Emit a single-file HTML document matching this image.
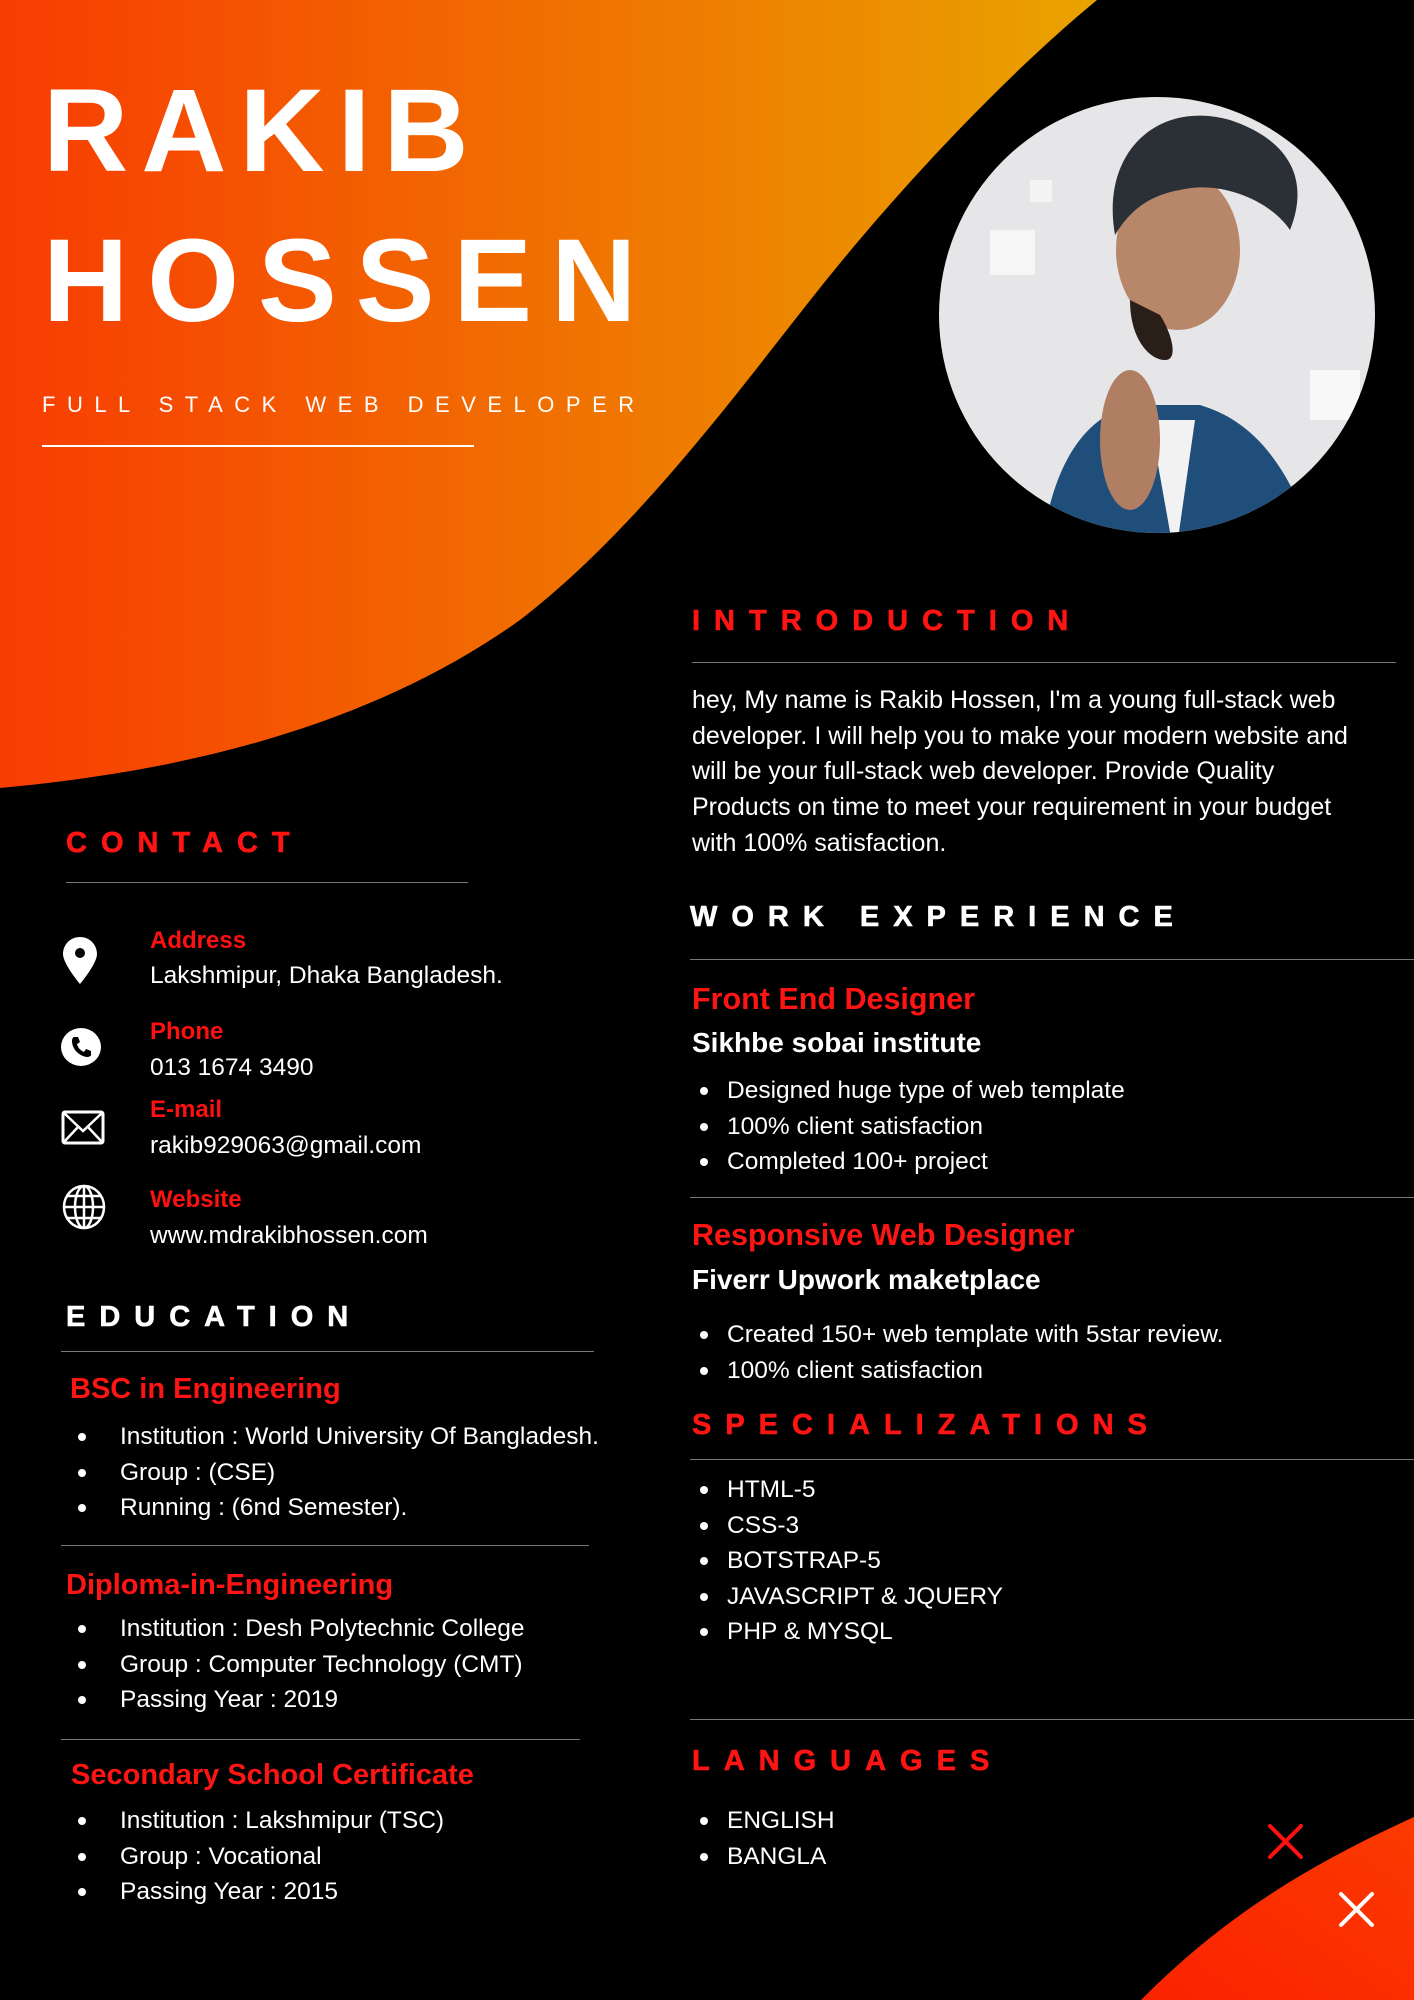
<!DOCTYPE html>
<html><head><meta charset="utf-8"><style>
*{margin:0;padding:0;box-sizing:border-box}
body{width:1414px;height:2000px;background:#000;position:relative;overflow:hidden;font-family:"Liberation Sans",sans-serif;color:#fff}
.a{position:absolute;white-space:nowrap}
.name{font-weight:bold;font-size:118px;line-height:118px;color:#fff}
.h{font-weight:bold;font-size:29px;line-height:34px;letter-spacing:14px;-webkit-text-stroke:0.6px currentColor}
.red{color:#ff1414}
.ln{position:absolute;height:1px;background:#777}
.lab{font-weight:bold;font-size:24px;line-height:28px;color:#ff1010}
.val{font-size:24.5px;line-height:28px;color:#fff}
.t{font-weight:bold;font-size:29px;line-height:34px;color:#ff1414}
.st{font-weight:bold;font-size:28px;line-height:32px;color:#fff}
.ul{position:absolute;font-size:24.5px;line-height:35.5px;white-space:nowrap}
.ul div{position:relative;padding-left:var(--p)}
.ul div:before{content:"";position:absolute;left:0;top:14px;width:8px;height:8px;border-radius:50%;background:#fff}
.p{font-size:25px;line-height:35.7px}
</style></head><body>
<svg class="a" style="left:0;top:0" width="1414" height="2000">
<defs>
<linearGradient id="g" x1="0" y1="0" x2="1" y2="0"><stop offset="0" stop-color="#f83c02"/><stop offset="1" stop-color="#e9a300"/></linearGradient>
<linearGradient id="g2" x1="0" y1="1" x2="1" y2="0"><stop offset="0" stop-color="#fb2200"/><stop offset="1" stop-color="#fb3a00"/></linearGradient>
<clipPath id="c"><circle cx="1157" cy="315" r="218"/></clipPath>
</defs>
<path d="M0 0 H1097 C1000 80 900 190 841 262 C760 360 650 520 520 620 C380 720 200 770 0 788 Z" fill="url(#g)"/>
<path d="M1414 1817 C1320 1860 1230 1910 1141 2000 H1414 Z" fill="url(#g2)"/>
<g stroke-linecap="round" stroke-width="4">
<path d="M1270 1826 L1301 1857 M1301 1826 L1270 1857" stroke="#ff1010"/>
<path d="M1341 1894 L1372 1925 M1372 1894 L1341 1925" stroke="#fff"/>
</g>
<g clip-path="url(#c)">
<rect x="930" y="90" width="460" height="460" fill="#e6e6e8"/>
<rect x="990" y="230" width="45" height="45" fill="#f6f6f6"/>
<rect x="1310" y="370" width="50" height="50" fill="#f8f8f8"/>
<rect x="1030" y="180" width="22" height="22" fill="#f4f4f4"/>
<path d="M1040 560 C1050 470 1080 420 1130 405 L1200 405 C1250 420 1290 460 1320 560 Z" fill="#1f4e7a"/>
<path d="M1150 420 L1175 560 L1195 420 Z" fill="#f2f2f2"/>
<ellipse cx="1178" cy="250" rx="62" ry="80" fill="#b8876a"/>
<path d="M1115 235 C1100 150 1160 100 1230 120 C1290 140 1310 180 1290 230 C1270 200 1220 180 1180 190 C1150 195 1130 210 1115 235Z" fill="#2b3036"/>
<path d="M1130 300 C1130 340 1150 360 1165 360 C1180 360 1170 330 1160 315Z" fill="#2a1f18"/>
<ellipse cx="1130" cy="440" rx="30" ry="70" fill="#b07e62"/>
</g>
</svg>
<div class="a name" style="left:43px;top:72px;letter-spacing:13px">RAKIB</div>
<div class="a name" style="left:43px;top:222px;letter-spacing:19px">HOSSEN</div>
<div class="a" style="left:42px;top:392px;font-size:22px;line-height:26px;letter-spacing:11.5px">FULL STACK WEB DEVELOPER</div>
<div class="a" style="left:42px;top:445px;width:432px;height:2px;background:#fff"></div>

<div class="a h red" style="left:66px;top:826px">CONTACT</div>
<div class="ln" style="left:66px;top:882px;width:402px"></div>
<svg class="a" style="left:62px;top:935px" width="40" height="50" viewBox="0 0 40 50"><path d="M18 2 C8 2 1 10 1 19 C1 29 18 49 18 49 C18 49 35 29 35 19 C35 10 28 2 18 2Z M18 13 A5 5 0 1 1 18 23 A5 5 0 1 1 18 13Z" fill="#fff" fill-rule="evenodd"/></svg>
<svg class="a" style="left:61px;top:1027px" width="40" height="40" viewBox="0 0 40 40"><ellipse cx="20" cy="20" rx="20" ry="19" fill="#fff"/><path d="M13 10 L17 10 L19 15 L16 17 C17 21 19 23 23 25 L25 22 L30 24 L30 28 C30 29 28 30 26 30 C18 29 11 22 11 14 C11 12 12 10 13 10Z" fill="#000"/></svg>
<svg class="a" style="left:61px;top:1110px" width="44" height="36" viewBox="0 0 44 36"><rect x="2" y="2" width="40" height="31" rx="2" fill="none" stroke="#fff" stroke-width="3"/><path d="M3 3 L22 21 L41 3 M3 32 L17 17 M41 32 L27 17" fill="none" stroke="#fff" stroke-width="2.5"/></svg>
<svg class="a" style="left:62px;top:1184px" width="44" height="46" viewBox="0 0 44 46"><g fill="none" stroke="#fff" stroke-width="2.5"><ellipse cx="22" cy="23" rx="20" ry="21"/><ellipse cx="22" cy="23" rx="9" ry="21"/><path d="M22 2 V44 M2 23 H42 M5 12 H39 M5 34 H39"/></g></svg>
<div class="a lab" style="left:150px;top:927px">Address</div>
<div class="a val" style="left:150px;top:962px">Lakshmipur, Dhaka Bangladesh.</div>
<div class="a lab" style="left:150px;top:1018px">Phone</div>
<div class="a val" style="left:150px;top:1054px">013 1674 3490</div>
<div class="a lab" style="left:150px;top:1096px">E-mail</div>
<div class="a val" style="left:150px;top:1132px">rakib929063@gmail.com</div>
<div class="a lab" style="left:150px;top:1186px">Website</div>
<div class="a val" style="left:150px;top:1222px">www.mdrakibhossen.com</div>

<div class="a h" style="left:66px;top:1300px">EDUCATION</div>
<div class="ln" style="left:61px;top:1351px;width:533px"></div>
<div class="a t" style="left:70px;top:1372px">BSC in Engineering</div>
<div class="ul" style="left:78px;top:1419px;--p:42px"><div>Institution : World University Of Bangladesh.</div><div>Group :  (CSE)</div><div>Running :  (6nd Semester).</div></div>
<div class="ln" style="left:61px;top:1545px;width:528px"></div>
<div class="a t" style="left:66px;top:1568px">Diploma-in-Engineering</div>
<div class="ul" style="left:78px;top:1611px;--p:42px"><div>Institution : Desh Polytechnic College</div><div>Group : Computer Technology (CMT)</div><div>Passing Year : 2019</div></div>
<div class="ln" style="left:61px;top:1739px;width:519px"></div>
<div class="a t" style="left:71px;top:1758px">Secondary School Certificate</div>
<div class="ul" style="left:78px;top:1803px;--p:42px"><div>Institution : Lakshmipur (TSC)</div><div>Group : Vocational</div><div>Passing Year : 2015</div></div>

<div class="a h red" style="left:692px;top:604px">INTRODUCTION</div>
<div class="ln" style="left:692px;top:662px;width:704px"></div>
<div class="a p" style="left:692px;top:683px">hey, My name is Rakib Hossen, I'm a young full-stack web<br>developer. I will help you to make your modern website and<br>will be your full-stack web developer. Provide Quality<br>Products on time to meet your requirement in your budget<br>with 100% satisfaction.</div>

<div class="a h" style="left:690px;top:900px">WORK EXPERIENCE</div>
<div class="ln" style="left:690px;top:959px;width:724px"></div>
<div class="a t" style="left:692px;top:982px;font-size:30.5px">Front End Designer</div>
<div class="a st" style="left:692px;top:1027px">Sikhbe sobai institute</div>
<div class="ul" style="left:700px;top:1073px;--p:27px"><div>Designed huge type of web template</div><div>100% client satisfaction</div><div>Completed 100+ project</div></div>
<div class="ln" style="left:690px;top:1197px;width:724px"></div>
<div class="a t" style="left:692px;top:1218px;font-size:30.5px">Responsive Web Designer</div>
<div class="a st" style="left:692px;top:1264px">Fiverr Upwork maketplace</div>
<div class="ul" style="left:700px;top:1317px;--p:27px"><div>Created 150+ web template with 5star review.</div><div>100% client satisfaction</div></div>

<div class="a h red" style="left:692px;top:1408px">SPECIALIZATIONS</div>
<div class="ln" style="left:690px;top:1459px;width:724px"></div>
<div class="ul" style="left:700px;top:1472px;--p:27px"><div>HTML-5</div><div>CSS-3</div><div>BOTSTRAP-5</div><div>JAVASCRIPT &amp; JQUERY</div><div>PHP &amp; MYSQL</div></div>
<div class="ln" style="left:690px;top:1719px;width:724px"></div>
<div class="a h red" style="left:692px;top:1744px">LANGUAGES</div>
<div class="ul" style="left:700px;top:1803px;--p:27px"><div>ENGLISH</div><div>BANGLA</div></div>
</body></html>
